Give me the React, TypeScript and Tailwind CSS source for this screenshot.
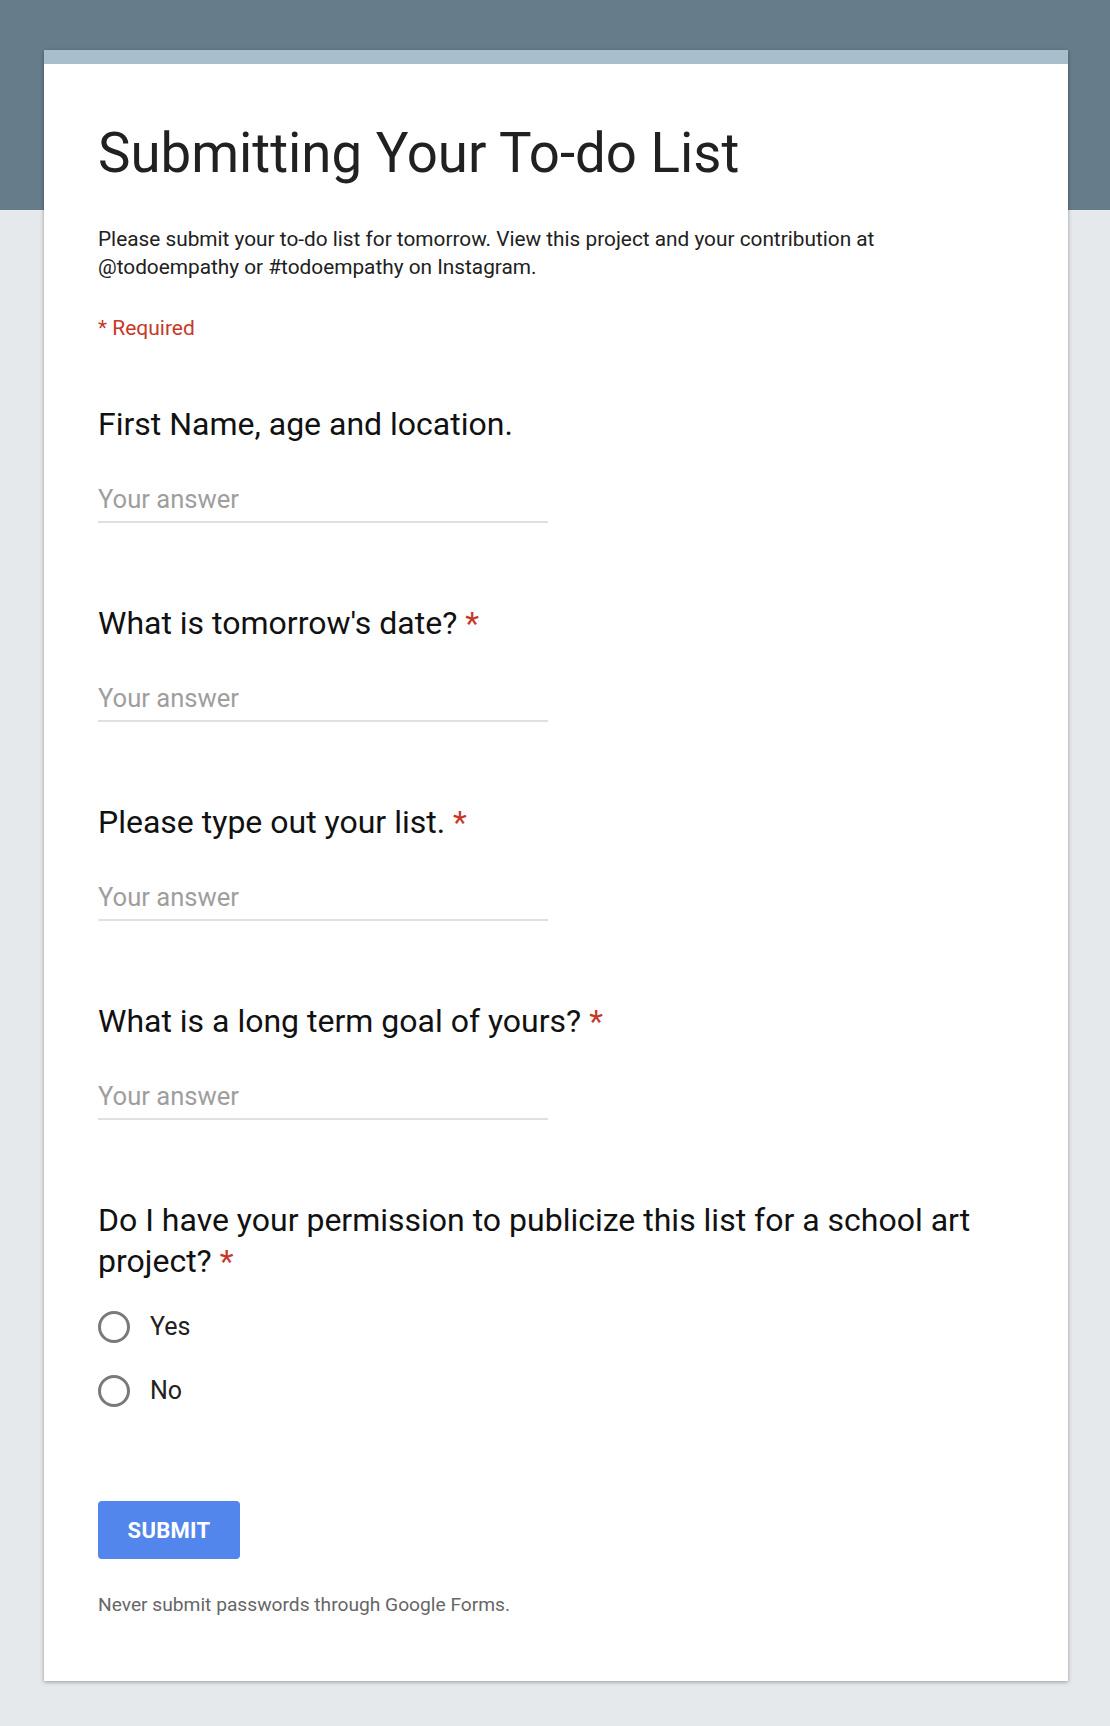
import React from "react";

const questions = [
  { title: "First Name, age and location.", required: false },
  { title: "What is tomorrow's date?", required: true },
  { title: "Please type out your list.", required: true },
  { title: "What is a long term goal of yours?", required: true },
];

function Question({ title, required }: { title: string; required: boolean }) {
  return (
    <div className="flex flex-col">
      <div className="text-[32px] leading-[41px] text-[#111]">
        {title}
        {required && <span className="text-[#c53929]"> *</span>}
      </div>
      <div className="mt-[38px] w-[450px] border-b-2 border-[#e0e0e0] pb-[6px] text-[25.6px] leading-[32px] text-[#9e9e9e]">
        Your answer
      </div>
    </div>
  );
}

function Radio({ label }: { label: string }) {
  return (
    <div className="flex h-[48px] items-center gap-[20px]">
      <div className="h-[32px] w-[32px] rounded-full border-[3px] border-[#7a7a7a]" />
      <span className="text-[25px] leading-[32px] text-[#212121]">{label}</span>
    </div>
  );
}

export default function App() {
  return (
    <div
      className="min-h-[1726px] w-[1110px] bg-[linear-gradient(to_bottom,#677c8a_0px,#677c8a_210px,#e6e9ec_210px)] pt-[50px] pb-[46px] pl-[44px]"
      style={{ fontFamily: "Roboto, 'Noto Sans', Arial, sans-serif" }}
    >
      <div className="w-[1024px] bg-white shadow-[0_1px_4px_rgba(0,0,0,0.35)]">
        <div className="h-[14px] bg-[#a7bfcc]" />
        <div className="flex flex-col px-[54px] pt-[57px] pb-[62px]">
          <h1 className="text-[54.6px] leading-[64px] text-[#212121]">Submitting Your To-do List</h1>
          <p className="mt-[40px] text-[20.8px] leading-[28px] text-[#212121]">
            Please submit your to-do list for tomorrow. View this project and your contribution at
            <br />
            @todoempathy or #todoempathy on Instagram.
          </p>
          <div className="mt-[33px] text-[21px] leading-[28px] text-[#c53929]">* Required</div>

          <div className="mt-[62px] flex flex-col gap-[80px]">
            {questions.map((q) => (
              <Question key={q.title} title={q.title} required={q.required} />
            ))}
            <div className="flex flex-col">
              <div className="text-[32px] leading-[41px] text-[#111]">
                Do I have your permission to publicize this list for a school art project?{" "}
                <span className="text-[#c53929]">*</span>
              </div>
              <div className="mt-[21px] flex flex-col gap-[16px]">
                <Radio label="Yes" />
                <Radio label="No" />
              </div>
            </div>
          </div>

          <button className="mt-[86px] flex h-[58px] w-[142px] items-center justify-center rounded-[4px] bg-[#5286ec] text-[22px] font-bold tracking-[0.3px] text-white">
            SUBMIT
          </button>
          <div className="mt-[32px] text-[19.2px] leading-[28px] text-[#666]">
            Never submit passwords through Google Forms.
          </div>
        </div>
      </div>
    </div>
  );
}
